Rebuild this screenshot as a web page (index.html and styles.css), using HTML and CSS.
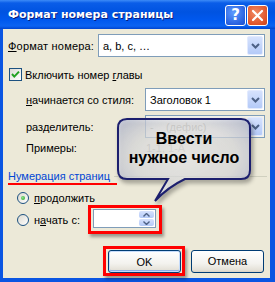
FILE: index.html
```html
<!DOCTYPE html>
<html lang="ru">
<head>
  <meta charset="UTF-8" />
  <title>Формат номера страницы</title>
  <link rel="stylesheet" href="styles.css">
</head>
<body>
  <div class="window">
    <!-- Заголовок окна -->
    <div class="titlebar">
      <span class="title">Формат номера страницы</span>
      <span class="tb-btn help">?</span>
      <span class="tb-btn close">
        <svg width="13" height="13" viewBox="0 0 13 13"><path d="M2 2 L11 11 M11 2 L2 11" stroke="#fff" stroke-width="2.2" stroke-linecap="round"/></svg>
      </span>
    </div>

    <div class="client">
      <div class="row format-row">
        <span class="label-main"><u>Ф</u>ормат номера:</span>
        <div class="combo">
          <span class="combo-text">a, b, c, …</span>
          <span class="arrow"><svg width="11" height="8" viewBox="0 0 11 8"><path d="M2 2 L5.5 5.5 L9 2" fill="none" stroke="#4D6185" stroke-width="2"/></svg></span>
        </div>
      </div>

      <div class="row check-row">
        <span class="checkbox">
          <svg width="11" height="11" viewBox="0 0 11 11"><path d="M2 5 L4.3 7.6 L9 2.6" fill="none" stroke="#21A121" stroke-width="2"/></svg>
        </span>
        <span>Включить номер <u>г</u>лавы</span>
      </div>

      <div class="row sub style-row">
        <span class="label-sub"><u>н</u>ачинается со стиля:</span>
        <div class="combo">
          <span class="combo-text">Заголовок 1</span>
          <span class="arrow"><svg width="11" height="8" viewBox="0 0 11 8"><path d="M2 2 L5.5 5.5 L9 2" fill="none" stroke="#4D6185" stroke-width="2"/></svg></span>
        </div>
      </div>

      <div class="row sub sep-row">
        <span class="label-sub">разделитель:</span>
        <div class="combo disabled">
          <span class="combo-text">-&nbsp;&nbsp;&nbsp;&nbsp;(дефис)</span>
          <span class="arrow"><svg width="11" height="8" viewBox="0 0 11 8"><path d="M2 2 L5.5 5.5 L9 2" fill="none" stroke="#4D6185" stroke-width="2"/></svg></span>
        </div>
      </div>

      <div class="row sub sample-row">
        <span class="label-sub">Примеры:</span>
        <span class="sample">1-1, 1-A</span>
      </div>

      <!-- Нумерация страниц -->
      <div class="group-title">
        <span class="marked">Нумерация страниц</span>
        <span class="sep"></span>
      </div>

      <div class="row radio-row first">
        <span class="radio on"></span>
        <span><u>п</u>родолжить</span>
      </div>

      <div class="row radio-row second">
        <span class="radio"></span>
        <span>н<u>а</u>чать с:</span>
        <span class="redbox spin-box">
          <span class="spin">
            <span class="spin-btns">
              <span class="spin-up"><svg width="7" height="4" viewBox="0 0 7 4"><path d="M0.5 3.5 L3.5 0.5 L6.5 3.5" fill="none" stroke="#4D6185" stroke-width="1.4"/></svg></span>
              <span class="spin-down"><svg width="7" height="4" viewBox="0 0 7 4"><path d="M0.5 0.5 L3.5 3.5 L6.5 0.5" fill="none" stroke="#4D6185" stroke-width="1.4"/></svg></span>
            </span>
          </span>
        </span>
      </div>

      <div class="actions">
        <span class="redbox ok-box"><button class="btn default">OK</button></span>
        <button class="btn">Отмена</button>
      </div>
    </div>

    <!-- Выноска -->
    <div class="callout">
      <svg class="callout-shape" width="140" height="90" viewBox="0 0 140 90">
        <defs>
          <radialGradient id="cg" cx="50%" cy="45%" r="65%">
            <stop offset="0%" stop-color="#ffffff" stop-opacity="0.7"/>
            <stop offset="60%" stop-color="#f4f5f9" stop-opacity="0.6"/>
            <stop offset="100%" stop-color="#b9bfd6" stop-opacity="0.8"/>
          </radialGradient>
        </defs>
        <path d="M11 2 H125 Q134 2 134 11 V53 Q134 62 125 62 H69 Q52 70 39 84 L52 62 H11 Q2 62 2 53 V11 Q2 2 11 2 Z" fill="url(#cg)" stroke="#1C1F6E" stroke-width="2"/>
      </svg>
      <div class="callout-text">Ввести<br>нужное число</div>
    </div>
  </div>
</body>
</html>
```

FILE: styles.css
```css
/* Общий стиль */
body {
  margin: 0;
  font-family: 'Liberation Sans', Arial, sans-serif;
  font-size: 11px;
  color: #000;
  overflow: hidden;
}
.window {
  position: relative;
  width: 275px;
  height: 282px;
  background: #0A55E2;
  display: flex;
  flex-direction: column;
}
.titlebar {
  height: 29px;
  flex: none;
  display: flex;
  align-items: center;
  padding: 0 7px 0 8px;
  background: linear-gradient(#3D8BF7 0, #0A5DE8 3px, #0053E1 12px, #0058EE 20px, #0B63F2 26px, #0044CF 29px);
  color: #fff;
}
.title {
  flex: 1;
  font-family: 'DejaVu Sans', sans-serif;
  font-weight: bold;
  font-size: 11px;
  text-shadow: 1px 1px #0A1E80;
  padding-bottom: 1px;
}
.tb-btn {
  width: 21px;
  height: 21px;
  box-sizing: border-box;
  border: 1px solid #fff;
  border-radius: 3px;
  display: flex;
  align-items: center;
  justify-content: center;
  margin-left: 1px;
  margin-top: 1px;
}
.help {
  background: radial-gradient(circle at 40% 35%, #5E9BFF, #2A62E0 70%, #1D4FCC);
  color: #fff;
  font-family: 'DejaVu Sans', sans-serif;
  font-weight: bold;
  font-size: 15px;
}
.close {
  background: radial-gradient(circle at 40% 35%, #F08A64, #E0542A 70%, #C94218);
}
/* Клиентская область */
.client {
  flex: 1;
  background: #ECE9D8;
  margin: 0 5px 4px 3px;
  padding: 0 5px;
  display: flex;
  flex-direction: column;
}
.row {
  display: flex;
  align-items: center;
}
.format-row {
  margin-top: 5px;
}
.label-main {
  width: 90px;
  flex: none;
  white-space: nowrap;
  letter-spacing: 0.2px;
}
.combo {
  flex: 1;
  height: 23px;
  box-sizing: border-box;
  border: 1px solid #7F9DB9;
  background: #fff;
  display: flex;
  align-items: center;
  padding-left: 4px;
}
.combo.disabled {
  background: #F3F2EA;
  color: #ACA899;
}
.arrow {
  margin-left: auto;
  margin-right: 1px;
  width: 16px;
  height: 19px;
  box-sizing: border-box;
  border: 1px solid #E2EAFE;
  border-radius: 2px;
  background: linear-gradient(#D6E2FD, #B4CAF8);
  display: flex;
  align-items: center;
  justify-content: center;
}
.check-row {
  margin-top: 11px;
  height: 13px;
}
.checkbox {
  width: 13px;
  height: 13px;
  box-sizing: border-box;
  border: 1px solid #1C5180;
  background: linear-gradient(135deg, #DCDBD5, #fff);
  display: flex;
  align-items: center;
  justify-content: center;
  margin: 0 3px 0 1px;
}
.sub {
  padding-left: 18px;
}
.label-sub {
  width: 119px;
  flex: none;
  white-space: nowrap;
}
.style-row {
  margin-top: 7px;
}
.sep-row {
  margin-top: 4px;
}
.sample-row {
  margin-top: 1px;
  height: 18px;
}
.sample {
  color: #ACA899;
  padding-left: 1px;
}
.group-title {
  display: flex;
  align-items: center;
  margin-top: 11px;
  height: 16px;
}
.marked {
  color: #0046D5;
  line-height: 13px;
  padding-right: 7px;
  border-bottom: 2px solid #F00;
  margin-top: 3px;
}
.sep {
  flex: 1;
  border-top: 1px solid #D0D0BF;
  margin: 0 -2px 0 -3px;
}
.radio-row {
  padding-left: 9px;
}
.radio-row.first {
  margin-top: 8px;
  height: 12px;
}
.radio-row.second {
  margin-top: 1px;
}
.radio {
  width: 12px;
  height: 12px;
  box-sizing: border-box;
  border: 1px solid #1C5180;
  border-radius: 50%;
  background: linear-gradient(135deg, #DCD9CF, #fff);
  margin-right: 5px;
  display: flex;
  align-items: center;
  justify-content: center;
}
.radio.on::after {
  content: '';
  width: 4px;
  height: 4px;
  border-radius: 50%;
  background: radial-gradient(circle at 40% 40%, #8EE28E, #21A121);
}
.redbox {
  border: 3px solid #F00;
  box-shadow: 2px 3px 3px rgba(0, 0, 0, 0.35);
  display: flex;
}
.spin-box {
  margin-left: 8px;
  padding: 1px 3px 3px 2px;
}
.spin {
  width: 63px;
  height: 19px;
  box-sizing: border-box;
  border: 1px solid #7F9DB9;
  background: #fff;
  display: flex;
  justify-content: flex-end;
  padding: 1px;
}
.spin-btns {
  width: 15px;
  display: flex;
  flex-direction: column;
  gap: 1px;
}
.spin-up,
.spin-down {
  flex: 1;
  border-radius: 2px;
  background: linear-gradient(#D6E2FD, #B4CAF8);
  display: flex;
  align-items: center;
  justify-content: center;
}
.actions {
  margin-top: 12px;
  display: flex;
  justify-content: flex-end;
  align-items: center;
  gap: 6px;
  padding-right: 1px;
}
.ok-box {
  padding: 1px 1px 0 2px;
}
.btn {
  width: 73px;
  height: 23px;
  border: 1px solid #003C74;
  border-radius: 3px;
  background: linear-gradient(#FFFFFF, #F3F2EE 60%, #E4E1D8 90%, #D6D0C5);
  font-family: 'Liberation Sans', Arial, sans-serif;
  font-size: 11px;
  color: #000;
  padding: 0;
}
.btn.default {
  box-shadow: inset 0 0 0 1px #C6DCFB, inset 0 -2px 0 #8EAFEA;
}
/* Выноска */
.callout {
  position: absolute;
  left: 116px;
  top: 117px;
  width: 140px;
  height: 90px;
}
.callout-shape {
  display: block;
  filter: drop-shadow(2px 3px 2px rgba(0, 0, 0, 0.4));
}
.callout-text {
  position: absolute;
  top: 12px;
  left: 2px;
  width: 132px;
  text-align: center;
  font-weight: bold;
  font-size: 16px;
  line-height: 19px;
}
```
